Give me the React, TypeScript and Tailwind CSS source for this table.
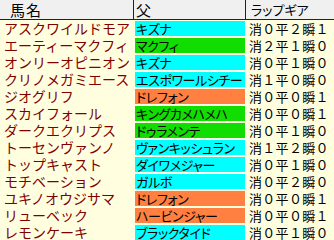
const rows: [string, string, string, string][] = [
  ["アスクワイルドモア", "キズナ", "cyan", "消０平２瞬１"],
  ["エーティーマクフィ", "マクフィ", "green", "消２平１瞬０"],
  ["オンリーオピニオン", "キズナ", "cyan", "消０平１瞬０"],
  ["クリノメガミエース", "エスポワールシチー", "cyan", "消１平０瞬０"],
  ["ジオグリフ", "ドレフォン", "orange", "消０平０瞬１"],
  ["スカイフォール", "キングカメハメハ", "green", "消０平０瞬１"],
  ["ダークエクリプス", "ドゥラメンテ", "green", "消０平１瞬０"],
  ["トーセンヴァンノ", "ヴァンキッシュラン", "cyan", "消１平２瞬０"],
  ["トップキャスト", "ダイワメジャー", "cyan", "消０平１瞬０"],
  ["モチベーション", "ガルボ", "cyan", "消０平２瞬０"],
  ["ユキノオウジサマ", "ドレフォン", "orange", "消０平０瞬１"],
  ["リューベック", "ハービンジャー", "orange", "消０平０瞬１"],
  ["レモンケーキ", "ブラックタイド", "cyan", "消０平１瞬０"],
];

const bg: Record<string, string> = {
  cyan: "bg-[#00ffff]",
  green: "bg-[#11dd00]",
  orange: "bg-[#ff8040]",
};

export default function App() {
  return (
    <div className="w-[334px] h-[240px] overflow-hidden bg-[#ffffe0] font-['Noto_Sans_CJK_JP',sans-serif]">
      <div className="flex h-[20px] bg-[#f0f0f0] border-b border-[#222] text-black">
        <div className="w-[134px] pl-[10px] text-[15px] leading-[19px] tracking-[1px] border-r border-[#222]">馬名</div>
        <div className="w-[112px] pl-[2px] text-[15px] leading-[19px] border-r border-[#222]">父</div>
        <div className="flex-1 pl-[5px] text-[13px] leading-[19px] [font-feature-settings:'palt']">ラップギア</div>
      </div>
      {rows.map(([name, sire, color, lap]) => (
        <div key={name} className="flex h-[17px]">
          <div className="w-[135px] pl-[4px] text-[14px] leading-[17px] text-[#800000] whitespace-nowrap">{name}</div>
          <div className="w-[110px] py-[1px]">
            <div className={`h-[15px] pl-[1px] text-[13px] leading-[15px] text-black whitespace-nowrap overflow-hidden [font-feature-settings:'palt'] tracking-[-0.4px] ${bg[color]}`}>
              {sire}
            </div>
          </div>
          <div className="flex-1 pl-[4px] text-[13px] leading-[17px] tracking-[0.3px] text-black whitespace-nowrap">{lap}</div>
        </div>
      ))}
    </div>
  );
}
